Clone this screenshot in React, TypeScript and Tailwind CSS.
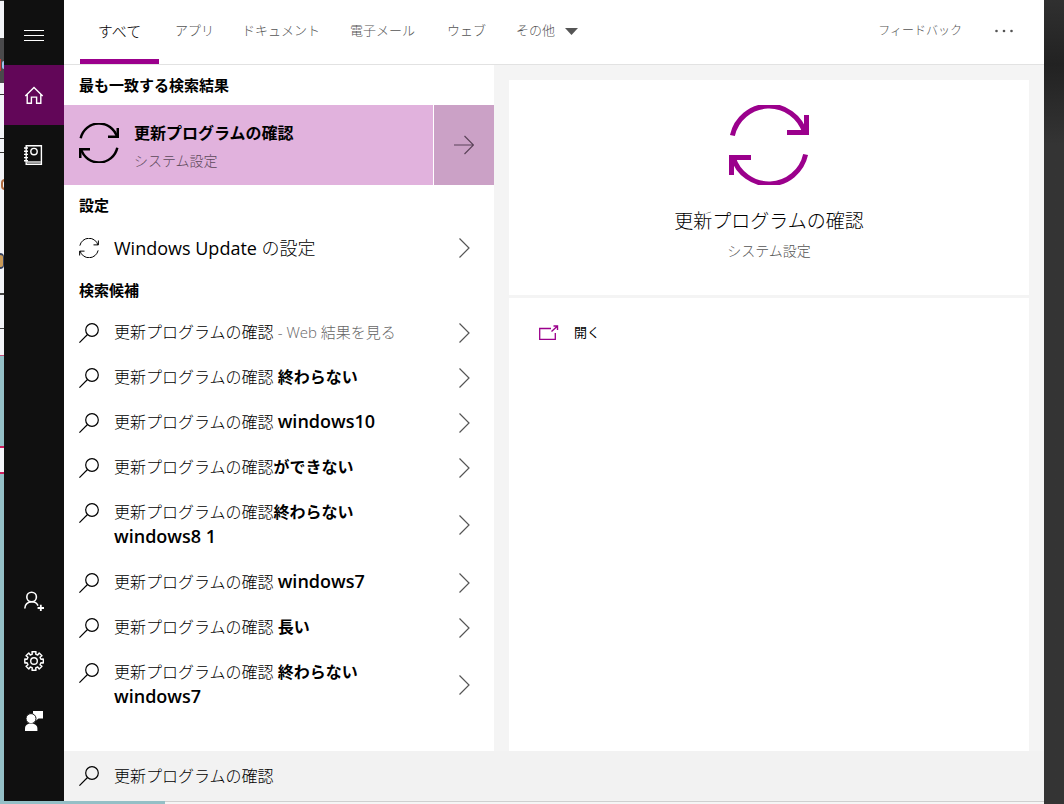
import React, { useState } from 'react';

const tabs = [
    { label: 'すべて', width: 'min-w-[79px]' },
    { label: 'アプリ', width: 'min-w-[71px]' },
    { label: 'ドキュメント', width: 'min-w-[102px]' },
    { label: '電子メール', width: 'min-w-[101px]' },
    { label: 'ウェブ', width: 'min-w-[67px]' },
];

const query = '更新プログラムの確認';

const suggestions = [
    { space: true, note: '- Web 結果を見る' },
    { space: true, bold: '終わらない' },
    { space: true, latin: 'windows10' },
    { space: false, bold: 'ができない' },
    { space: false, bold: '終わらない', latin: 'windows8 1', wrap: true },
    { space: true, latin: 'windows7' },
    { space: true, bold: '長い' },
    { space: true, bold: '終わらない', latin: 'windows7', wrap: true },
];

const SyncIcon = ({ className, stroke = 5 }: { className: string; stroke?: number }) => (
    <svg viewBox="0 0 80 80" fill="none" stroke="currentColor" strokeWidth={stroke} className={className}>
        <path d="M3.4 30.5A37.5 37.5 0 0 1 76 28" />
        <path d="M77.5 10V27.5H58" />
        <path d="M76.6 49.5A37.5 37.5 0 0 1 4 52" />
        <path d="M2.5 70V52.5H22" />
    </svg>
);

const SearchIcon = () => (
    <svg viewBox="0 0 20 20" fill="none" stroke="currentColor" strokeWidth="1.2" className="size-5 shrink-0">
        <circle cx="13" cy="7" r="6.3" />
        <path d="M8.5 11.5L0.4 19.6" />
    </svg>
);

const Chevron = () => (
    <svg viewBox="0 0 11 20" fill="none" stroke="#555" strokeWidth="1.2" className="h-5 w-[11px] shrink-0">
        <path d="M0.5 0.5L10 10L0.5 19.5" />
    </svg>
);

const NavButton = ({ label, active, children }: { label: string; active?: boolean; children: React.ReactNode }) => (
    <button
        aria-label={label}
        className={`flex h-[60px] w-full items-center justify-center text-white ${active ? 'bg-[#620658]' : ''}`}
    >
        <svg viewBox="0 0 20 20" fill="none" stroke="currentColor" strokeWidth="1.4" className="size-5">
            {children}
        </svg>
    </button>
);

const SideNav = () => (
    <nav className="flex w-[60px] shrink-0 flex-col justify-between bg-[#101010] pt-[5px] pb-[50px]">
        <div>
            <NavButton label="メニュー">
                <path d="M0 5.5H20M0 10.5H20M0 15.5H20" strokeWidth="1" />
            </NavButton>
            <NavButton label="ホーム" active>
                <path d="M1.3 11.1L10 2.5L18.7 11.1M3.2 9.5V18.3H7.4V12.1H12.6V18.3H16.8V9.5" />
            </NavButton>
            <NavButton label="ノートブック">
                <path d="M2.2 0.8H17.4V19.2H2.2Z" />
                <path d="M2.5 17H17" strokeWidth="2" stroke="#aaa" />
                <path d="M0 3H4M0 6.2H4M0 9.4H4M0 12.6H4M0 15.8H4" />
                <circle cx="10" cy="6.6" r="3.2" />
            </NavButton>
        </div>
        <div>
            <NavButton label="サインイン">
                <circle cx="7.6" cy="6" r="4.8" strokeWidth="1.6" />
                <path d="M0.8 17.4C0.8 13.4 3.8 10.8 7.6 10.8C10.6 10.8 13 12.3 14 14.6" strokeWidth="1.6" />
                <path d="M13.6 17H20M16.8 13.8V20.2" strokeWidth="1.8" />
            </NavButton>
            <NavButton label="設定">
                <circle cx="10" cy="10" r="3.3" />
                <path
                    strokeLinejoin="round"
                    d="M8.3 3.1L8 0.8L12 0.8L11.7 3.1L13.7 4L15.2 2L18 4.8L16 6.3L16.9 8.3L19.3 8L19.3 12L16.9 11.7L16 13.7L18 15.2L15.2 18L13.7 16L11.7 16.9L12 19.3L8 19.3L8.3 16.9L6.3 16L4.8 18L2 15.2L4 13.7L3.1 11.7L0.8 12L0.8 8L3.1 8.3L4 6.3L2 4.8L4.8 2L6.3 4Z"
                />
            </NavButton>
            <NavButton label="フィードバック">
                <g fill="currentColor" stroke="none">
                    <path d="M9 0H19V7.5H14.5L11.5 10V7.5H9Z" />
                    <circle cx="7" cy="7.6" r="5" stroke="#101010" strokeWidth="1" />
                    <path d="M1 20V17.5C1 14.2 3.6 12.6 7 12.6S13.4 14.2 13.4 17.5V20Z" />
                </g>
            </NavButton>
        </div>
    </nav>
);

const Heading = ({ children }: { children: React.ReactNode }) => (
    <h2 className="flex h-10 items-center px-[15px] pt-px text-[15px] font-semibold">{children}</h2>
);

// Sliver of the window that shows behind the panel
const BackdropLeft = () => (
    <div className="flex w-1 shrink-0 flex-col overflow-hidden bg-[#f3f4f8]">
        <div className="h-px bg-[#444]" />
        <div className="h-[37px]" />
        <div className="flex h-[45px] items-center bg-[#4a4a4c] pt-2">
            <div className="h-3 w-px bg-[#d03a3a]" />
            <div className="ml-px h-2 w-[2px] rounded-l-full bg-[#9cc4f0]" />
        </div>
        <div className="h-[11px]" />
        <div className="h-px bg-[#333]" />
        <div className="h-[43px]" />
        <div className="h-px bg-[#333]" />
        <div className="h-[13px]" />
        <div className="h-px bg-[#333]" />
        <div className="h-[26px]" />
        <div className="ml-px h-[11px] w-2 rounded-full border-2 border-[#b06c40]" />
        <div className="h-[63px]" />
        <div className="h-[16px] rounded-r-full border-y-2 border-r border-[#34405e] bg-[#c99a58]" />
        <div className="h-[24px]" />
        <div className="h-[2px] bg-[#444]" />
        <div className="h-[33px]" />
        <div className="h-px bg-[#444]" />
        <div className="h-[26px]" />
        <div className="h-[91px] border-t border-[#c8507c] bg-[#94bfc6]" />
        <div className="h-[28px] border-y-2 border-[#cc1d5c]" />
        <div className="flex-1 bg-[#94bfc6]" />
    </div>
);

const App = () => {
    const [search, setSearch] = useState(query);
    const [active, setActive] = useState('すべて');

    return (
        <div className="flex min-h-screen bg-[#f5f5f5] font-['Open_Sans','Noto_Sans_CJK_JP',sans-serif] text-black">
            <div className="flex min-w-0 flex-1 flex-col">
                <div className="flex flex-1">
                    <BackdropLeft />
                    <SideNav />
                    <main className="flex min-w-0 flex-1 flex-col">
                        <header className="flex h-[65px] justify-between border-b border-[#e2e2e2] bg-white pr-[14px] pl-4 text-[13px] font-light text-[#555]">
                            <div className="flex">
                                {tabs.map((tab) => (
                                    <button
                                        key={tab.label}
                                        onClick={() => setActive(tab.label)}
                                        className={`border-b-5 pt-[3px] whitespace-nowrap ${tab.width} ${
                                            active === tab.label
                                                ? 'border-[#9b008c] text-[15px] text-black'
                                                : 'border-transparent'
                                        }`}
                                    >
                                        {tab.label}
                                    </button>
                                ))}
                                <button className="flex items-center gap-[10px] px-4 pb-[2px] whitespace-nowrap">
                                    その他
                                    <svg viewBox="0 0 13 7" fill="currentColor" className="h-[7px] w-[13px]">
                                        <path d="M0 0H13L6.5 7Z" />
                                    </svg>
                                </button>
                            </div>
                            <div className="flex pb-[2px]">
                                <button className="px-4 text-xs whitespace-nowrap">フィードバック</button>
                                <button aria-label="その他のオプション" className="px-4">
                                    <svg viewBox="0 0 20 4" fill="currentColor" className="h-1 w-5">
                                        <circle cx="2.5" cy="2" r="1.3" />
                                        <circle cx="10" cy="2" r="1.3" />
                                        <circle cx="17.5" cy="2" r="1.3" />
                                    </svg>
                                </button>
                            </div>
                        </header>

                        <div className="flex flex-1">
                            <section className="w-[430px] shrink-0 bg-white">
                                <Heading>最も一致する検索結果</Heading>
                                <div className="flex h-20 gap-px">
                                    <button className="flex flex-1 items-start gap-[15px] bg-[#e1b2dd] px-[15px] py-[14px] text-left">
                                        <SyncIcon className="mt-1 size-10 shrink-0" />
                                        <span>
                                            <span className="block text-base leading-7 font-semibold">{query}</span>
                                            <span className="block text-sm leading-7 font-light text-[#5c495a]">システム設定</span>
                                        </span>
                                    </button>
                                    <button
                                        aria-label="開く"
                                        className="flex w-[60px] items-center justify-center bg-[#cba1c6] text-[#5b4359]"
                                    >
                                        <svg viewBox="0 0 20 20" fill="none" stroke="currentColor" className="size-5">
                                            <path d="M0 10H19M10.5 1L19.5 10L10.5 19" strokeWidth="1.2" />
                                        </svg>
                                    </button>
                                </div>

                                <Heading>設定</Heading>
                                <button className="flex w-full items-center gap-[15px] pr-6 pl-[15px] text-left">
                                    <SyncIcon className="size-5 shrink-0" stroke={4} />
                                    <span className="flex-1 pt-px text-lg leading-[44px]">
                                        Windows Update <span className="font-light">の設定</span>
                                    </span>
                                    <Chevron />
                                </button>

                                <Heading>検索候補</Heading>
                                <ul>
                                    {suggestions.map((item, i) => (
                                        <li key={i}>
                                            <button className="flex w-full items-center gap-[15px] py-[10px] pr-6 pl-[15px] text-left">
                                                <span className="self-start pt-[3px]">
                                                    <SearchIcon />
                                                </span>
                                                <span className="flex-1 text-base leading-[25px] font-light">
                                                    {query}
                                                    {item.space && ' '}
                                                    {item.note && (
                                                        <span className="text-[15px] leading-5 text-[#666]">{item.note}</span>
                                                    )}
                                                    {item.bold && <b className="font-semibold">{item.bold}</b>}
                                                    {item.wrap && <br />}
                                                    {item.latin && <b className="text-lg leading-5 font-semibold">{item.latin}</b>}
                                                </span>
                                                <Chevron />
                                            </button>
                                        </li>
                                    ))}
                                </ul>
                            </section>

                            <section className="flex min-w-0 flex-1 flex-col gap-[3px] bg-[#f4f4f4] px-[15px] pt-[15px]">
                                <div className="flex h-[215px] flex-col items-center bg-white pt-[25px] font-light">
                                    <SyncIcon className="size-20 text-[#9b008c]" />
                                    <h1 className="mt-5 text-[19px] leading-8">{query}</h1>
                                    <p className="text-sm leading-7 text-[#555]">システム設定</p>
                                </div>
                                <div className="flex-1 bg-white">
                                    <button className="mt-3 flex h-[45px] w-full items-center gap-[15px] px-[30px] text-[13px]">
                                        <svg viewBox="0 0 20 16" fill="none" stroke="#9b008c" className="h-4 w-5">
                                            <path d="M12 3.5H0.7V14.3H16.3V8" strokeWidth="1.3" />
                                            <path d="M12.5 6.5L18 1.5M14.5 1H18.5V5" strokeWidth="1.4" />
                                        </svg>
                                        開く
                                    </button>
                                </div>
                            </section>
                        </div>

                        <label className="flex h-[50px] items-center gap-[15px] bg-[#f2f2f2] px-[15px]">
                            <SearchIcon />
                            <input
                                aria-label="検索"
                                value={search}
                                onChange={(e) => setSearch(e.target.value)}
                                className="flex-1 bg-transparent text-base font-light outline-none"
                            />
                        </label>
                    </main>
                </div>
                <div className="flex h-[3px]">
                    <div className="w-[165px] bg-[#94bfc6]" />
                    <div className="flex-1 border-t border-[#cfcfcf]" />
                </div>
            </div>
            <div className="w-5 shrink-0 bg-linear-to-b from-[#303030] from-0% via-[#222] via-8% to-[#343434] to-18%" />
        </div>
    );
};

export default App;
